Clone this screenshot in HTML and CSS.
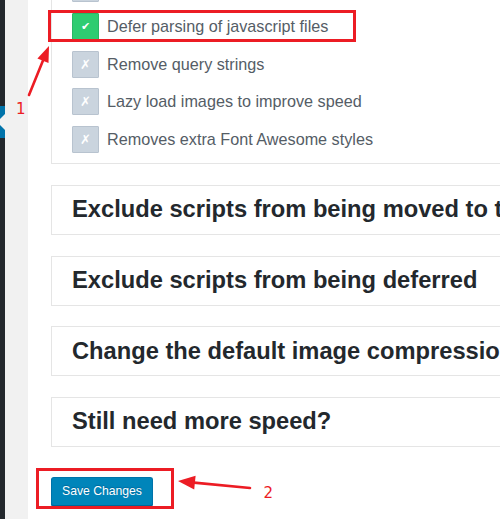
FILE: index.html
```html
<!DOCTYPE html>
<html lang="en">
<head>
<meta charset="utf-8">
<title>Speed settings</title>
<link rel="stylesheet" href="styles.css">
</head>
<body>
<div class="page">
  <aside class="adminmenu">
    <div class="menu-spacer"></div>
    <div class="menu-current"><span class="menu-arrow"></span></div>
  </aside>
  <div class="gutter"></div>
  <main class="content">
    <div class="options">
      <div class="opt"><span class="cb off"></span></div>
      <div class="opt"><span class="cb on">✔</span><span class="label">Defer parsing of javascript files</span></div>
      <div class="opt"><span class="cb off">✗</span><span class="label">Remove query strings</span></div>
      <div class="opt"><span class="cb off">✗</span><span class="label">Lazy load images to improve speed</span></div>
      <div class="opt"><span class="cb off">✗</span><span class="label">Removes extra Font Awesome styles</span></div>
    </div>
    <section class="acc"><h2>Exclude scripts from being moved to the footer</h2></section>
    <section class="acc"><h2>Exclude scripts from being deferred</h2></section>
    <section class="acc"><h2>Change the default image compression level</h2></section>
    <section class="acc"><h2>Still need more speed?</h2></section>
    <div class="actions"><button class="btn" type="button">Save Changes</button></div>
  </main>
</div>

<div class="annot">
  <div class="mark mark1"></div>
  <div class="mark mark2"></div>
  <svg class="arrows" width="500" height="519" viewBox="0 0 500 519">
    <line x1="29" y1="95" x2="43" y2="60.5" stroke="#ec1c24" stroke-width="2.6" stroke-linecap="round"/>
    <polygon points="49,46 48.5,63.1 37.4,58.5" fill="#ec1c24"/>
    <line x1="250" y1="488" x2="194" y2="482.6" stroke="#ec1c24" stroke-width="2.6" stroke-linecap="round"/>
    <polygon points="178,481 195.6,475.7 194.2,489.6" fill="#ec1c24"/>
  </svg>
  <span class="num num1">1</span>
  <span class="num num2">2</span>
</div>
</body>
</html>
```

FILE: styles.css
```css
html, body {
  margin: 0;
  padding: 0;
}
body {
  width: 500px;
  height: 519px;
  overflow: hidden;
  position: relative;
  background: #fff;
  font-family: "Liberation Sans", Arial, sans-serif;
}
.page {
  display: flex;
  height: 519px;
}
.adminmenu {
  flex: 0 0 5px;
  width: 5px;
  min-width: 0;
  overflow: hidden;
  background: #23282d;
  display: flex;
  flex-direction: column;
}
.menu-spacer {
  height: 106px;
}
.menu-current {
  height: 32px;
  background: #0073aa;
  display: flex;
  align-items: center;
  justify-content: flex-end;
  overflow: hidden;
}
.menu-arrow {
  width: 0;
  height: 0;
  border-top: 8px solid transparent;
  border-bottom: 8px solid transparent;
  border-right: 8px solid #f1f1f1;
  flex: 0 0 auto;
}
.gutter {
  flex: 0 0 23px;
  background: #f1f1f1;
}
.content {
  flex: 0 0 auto;
  width: 560px;
  padding-left: 23px;
  background: #fff;
}
.options {
  margin-top: -35.6px;
  border: 1px solid #e5e5e5;
  padding: 10px 20px 10px 20px;
  display: flex;
  flex-direction: column;
  gap: 10.6px;
}
.opt {
  display: flex;
  align-items: center;
  gap: 8px;
  height: 27px;
}
.cb {
  box-sizing: border-box;
  flex: 0 0 27px;
  width: 27px;
  height: 27px;
  display: flex;
  align-items: center;
  justify-content: center;
  color: #fff;
  font-family: "DejaVu Sans", sans-serif;
  border-radius: 1px;
}
.cb.off {
  background: #cad4de;
  border: 1px solid #b8c3cf;
  font-size: 13px;
}
.cb.on {
  background: #2ecc71;
  border: 1px solid #29b765;
  font-size: 11px;
}
.label {
  font-size: 16.2px;
  color: #555d66;
  white-space: nowrap;
}
.acc {
  box-sizing: border-box;
  height: 50px;
  margin-top: 20.67px;
  border: 1px solid #e5e5e5;
  padding-left: 20px;
  display: flex;
  align-items: center;
}
.options + .acc {
  margin-top: 21.2px;
}
.acc h2 {
  margin: 0;
  font-size: 23.7px;
  font-weight: bold;
  color: #23282d;
  white-space: nowrap;
}
.actions {
  margin-top: 30px;
  display: flex;
}
.btn {
  box-sizing: border-box;
  height: 29px;
  padding: 0 10px 1px;
  background: #0085ba;
  border: 1px solid #0073aa;
  border-bottom-color: #006799;
  border-radius: 3px;
  box-shadow: 0 1px 0 #006799;
  color: #fff;
  font-family: "Liberation Sans", Arial, sans-serif;
  font-size: 12.2px;
  text-shadow: 0 -1px 1px #006799;
  cursor: pointer;
}
.annot {
  position: absolute;
  left: 0;
  top: 0;
  width: 500px;
  height: 519px;
  pointer-events: none;
}
.mark {
  position: absolute;
  box-sizing: border-box;
  border: 3px solid #ec1c24;
}
.mark1 {
  left: 48px;
  top: 10px;
  width: 308px;
  height: 32px;
}
.mark2 {
  left: 36px;
  top: 468px;
  width: 138px;
  height: 41px;
}
.arrows {
  position: absolute;
  left: 0;
  top: 0;
}
.num {
  position: absolute;
  font-family: "DejaVu Sans", sans-serif;
  font-size: 15px;
  line-height: 15px;
  color: #ec1c24;
}
.num1 {
  left: 16px;
  top: 102px;
}
.num2 {
  left: 263.5px;
  top: 486px;
}
```
